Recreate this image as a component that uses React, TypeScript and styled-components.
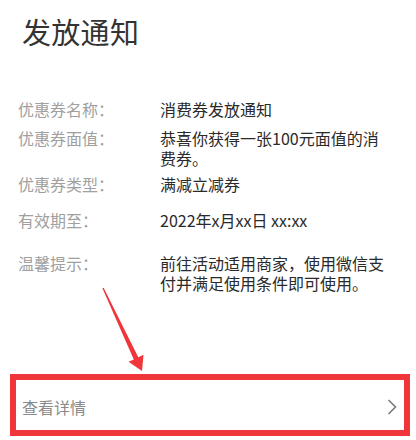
import React, { FC } from 'react';
import styled, { createGlobalStyle } from 'styled-components';

const GlobalStyle = createGlobalStyle`
  html, body {
    margin: 0;
    padding: 0;
    background: #ffffff;
  }
  body {
    font-family: "Noto Sans CJK SC", "Noto Sans", sans-serif;
  }
`;

const Page = styled.div`
  position: relative;
  width: 416px;
  height: 440px;
  overflow: hidden;
  background: #ffffff;
`;

const Title = styled.h1`
  margin: 11px 0 0 22px;
  font-size: 29px;
  line-height: 40px;
  font-weight: 400;
  color: #333333;
  letter-spacing: 0.3px;
`;

const List = styled.div`
  display: flex;
  flex-direction: column;
  margin-top: 48px;
  padding-left: 18px;
`;

const Row = styled.div<{ $top: number }>`
  display: flex;
  margin-top: ${(p) => p.$top}px;
  font-size: 16px;
  line-height: 20.5px;
`;

const Label = styled.span`
  flex: 0 0 142px;
  color: #a0a0a0;
`;

const Value = styled.span`
  width: 230px;
  color: #2a2a2a;
`;

const DetailBox = styled.div`
  display: flex;
  align-items: center;
  justify-content: space-between;
  box-sizing: border-box;
  width: 400px;
  height: 62px;
  margin: 80px 0 0 10px;
  padding: 4px 6px 0 6px;
  border: 6px solid #f0363b;
  font-size: 16px;
  color: #8a8a8a;
`;

const Overlay = styled.svg`
  position: absolute;
  left: 0;
  top: 0;
  pointer-events: none;
`;

const rows = [
  { label: '优惠券名称：', value: '消费券发放通知', top: 0 },
  { label: '优惠券面值：', value: '恭喜你获得一张100元面值的消费券。', top: 8 },
  { label: '优惠券类型：', value: '满减立减券', top: 5 },
  { label: '有效期至：', value: '2022年x月xx日 xx:xx', top: 16 },
  { label: '温馨提示：', value: '前往活动适用商家，使用微信支付并满足使用条件即可使用。', top: 22 },
];

const Chevron: FC = () => (
  <svg width="12" height="18" viewBox="0 0 12 18">
    <polyline points="2.5,2 9.5,9 2.5,16" fill="none" stroke="#7a7a7a" strokeWidth="1.6" />
  </svg>
);

export default function App() {
  return (
    <Page>
      <GlobalStyle />
      <Title>发放通知</Title>
      <List>
        {rows.map((r) => (
          <Row key={r.label} $top={r.top}>
            <Label>{r.label}</Label>
            <Value>{r.value}</Value>
          </Row>
        ))}
      </List>
      <DetailBox>
        <span>查看详情</span>
        <Chevron />
      </DetailBox>
      <Overlay width="416" height="440" viewBox="0 0 416 440">
        <polygon
          points="102.4,288.3 103.6,287.7 138.3,357.2 143.5,354.8 142,371 128.5,361.8 133.8,359.4"
          fill="#f0363b"
        />
      </Overlay>
    </Page>
  );
}
